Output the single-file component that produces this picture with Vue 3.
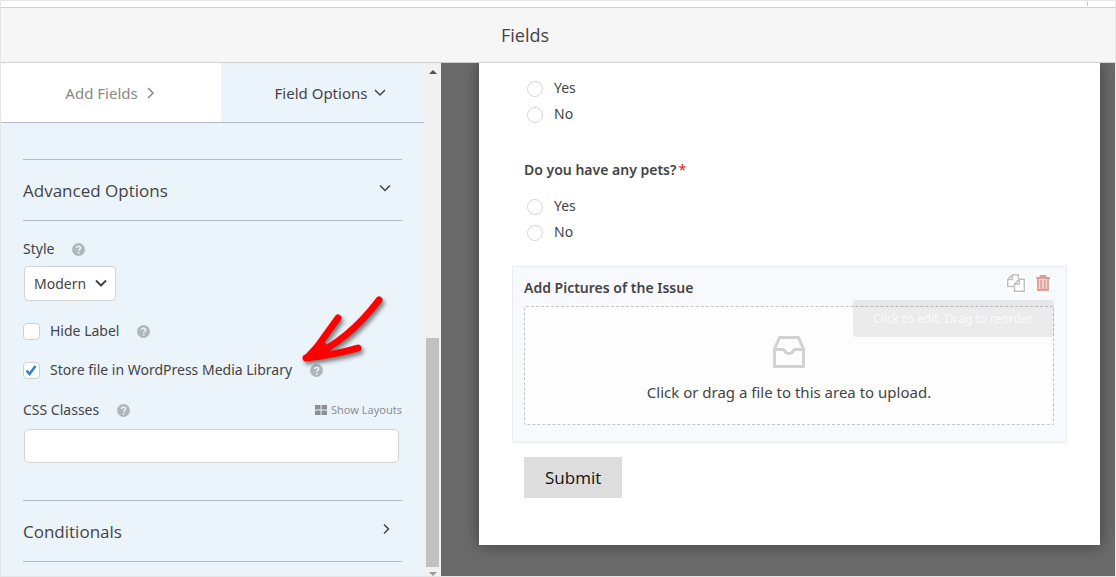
<script setup>
import { ref } from 'vue'

const hideLabel = ref(false)
const storeFile = ref(true)
const style = ref('modern')
const cssClasses = ref('')
const people = ref('')
const pets = ref('')
</script>

<template>
  <div class="page">
    <div class="strip"><span class="tick"></span></div>
    <header class="header"><h1>Fields</h1></header>

    <div class="builder">
      <aside class="sidebar">
        <div class="pane">
          <nav class="tabs">
            <button type="button" class="tab">
              Add Fields
              <svg class="chev" viewBox="0 0 12 12"><path d="M3 1l5 5-5 5" /></svg>
            </button>
            <button type="button" class="tab active">
              Field Options
              <svg class="chev" viewBox="0 0 12 12"><path d="M1 3l5 5 5-5" /></svg>
            </button>
          </nav>

          <div class="options">
            <button type="button" class="section">
              Advanced Options
              <svg class="chev dark" viewBox="0 0 12 12"><path d="M1 3.500l5 5 5-5" /></svg>
            </button>

            <div class="row style-row">
              <label for="style">Style</label>
              <svg class="help" viewBox="0 0 12 12"><circle cx="6" cy="6" r="6" /><path d="M4.200 4.700c0-2.400 3.700-2.200 3.700 0 0 1.300-1.700 1.200-1.700 2.400M6.200 8.200v1.500" /></svg>
            </div>
            <div class="select-wrap">
              <select id="style" v-model="style">
                <option value="modern">Modern</option>
                <option value="classic">Classic</option>
              </select>
              <svg class="select-arrow" viewBox="0 0 12 12"><path d="M1 3.500l5 5 5-5" /></svg>
            </div>

            <div class="row check-row">
              <input id="hide" v-model="hideLabel" type="checkbox" />
              <label for="hide">Hide Label</label>
              <svg class="help" viewBox="0 0 12 12"><circle cx="6" cy="6" r="6" /><path d="M4.200 4.700c0-2.400 3.700-2.200 3.700 0 0 1.300-1.700 1.200-1.700 2.400M6.200 8.200v1.500" /></svg>
            </div>
            <div class="row check-row">
              <input id="store" v-model="storeFile" type="checkbox" />
              <svg v-if="storeFile" class="tickmark" viewBox="0 0 12 12"><path d="M1.500 6.500l3 3.500L10.500 2" /></svg>
              <label for="store">Store file in WordPress Media Library</label>
              <svg class="help" viewBox="0 0 12 12"><circle cx="6" cy="6" r="6" /><path d="M4.200 4.700c0-2.400 3.700-2.200 3.700 0 0 1.300-1.700 1.200-1.700 2.400M6.200 8.200v1.500" /></svg>
              <svg class="pointer" viewBox="0 0 90 74">
                <path d="M79 6Q48 47 10 63L38 24" />
                <path d="M6 64Q34 61 58 54" />
                <path d="M8 63L21 49L27 57z" />
              </svg>
            </div>

            <div class="row css-row">
              <label for="css">CSS Classes</label>
              <svg class="help" viewBox="0 0 12 12"><circle cx="6" cy="6" r="6" /><path d="M4.200 4.700c0-2.400 3.700-2.200 3.700 0 0 1.300-1.700 1.200-1.700 2.400M6.200 8.200v1.500" /></svg>
              <a href="#" class="layouts">
                <svg viewBox="0 0 12 10"><path d="M0 0h5.500v4.500H0zM6.500 0H12v4.500H6.500zM0 5.500h5.500V10H0zM6.500 5.500H12V10H6.500z" /></svg>
                Show Layouts
              </a>
            </div>
            <input id="css" v-model="cssClasses" class="text" type="text" />

            <button type="button" class="section">
              Conditionals
              <svg class="chev dark" viewBox="0 0 12 12"><path d="M5 1.500l4.500 4.500L5 10.500" /></svg>
            </button>
          </div>
        </div>

        <div class="scrollbar">
          <svg class="arrow up" viewBox="0 0 8 4"><path d="M0 4L4 0L8 4z" /></svg>
          <div class="track"><div class="thumb"></div></div>
          <svg class="arrow down" viewBox="0 0 8 4"><path d="M0 0L4 4L8 0z" /></svg>
        </div>
      </aside>

      <main class="preview">
        <form class="sheet" @submit.prevent>
          <div class="field first">
            <label class="choice"><input v-model="people" type="radio" name="people" value="yes" />Yes</label>
            <label class="choice"><input v-model="people" type="radio" name="people" value="no" />No</label>
          </div>

          <fieldset class="field">
            <legend class="title">Do you have any pets?<span class="required">*</span></legend>
            <div class="choices">
              <label class="choice"><input v-model="pets" type="radio" name="pets" value="yes" />Yes</label>
              <label class="choice"><input v-model="pets" type="radio" name="pets" value="no" />No</label>
            </div>
          </fieldset>

          <div class="field selected">
            <div class="title">Add Pictures of the Issue</div>
            <div class="dropzone">
              <svg class="inbox" viewBox="0 0 32 32">
                <path d="M1.500 13L6.500 1.500h19l5 11.500v17.500h-29zM1.500 13.500h9c1 0 1 4 5.500 4s4.500-4 5.500-4h9" />
              </svg>
              <p>Click or drag a file to this area to upload.</p>
            </div>
            <div class="actions">
              <button type="button" aria-label="Duplicate">
                <svg class="copy" viewBox="0 0 18 18"><path d="M7.500 12.500H.7V5.500L5.500.7h5.800v4M5.500.7v4.800H.7M7.500 10l4.800-4.800h5v12.100H7.500zM12.300 5.200V10H7.500" /></svg>
              </button>
              <button type="button" aria-label="Delete">
                <svg class="trash" viewBox="0 0 14 16"><path d="M0 3h14M4.500 3V1h5v2M2 4v11h10V4M5.200 5v9M8.800 5v9" /></svg>
              </button>
            </div>
            <div class="tooltip">Click to edit. Drag to reorder.</div>
          </div>

          <button type="submit" class="submit">Submit</button>
        </form>
      </main>
    </div>
  </div>
</template>

<style>
body { margin: 0; }
</style>

<style scoped>
* { box-sizing: border-box; }
.page {
  min-height: 100vh;
  display: flex;
  flex-direction: column;
  border: 1px solid #e6e6e6;
  background: #fff;
  color: #444;
  font-family: "Noto Sans", "Open Sans", sans-serif;
  font-size: 14px;
  line-height: 24px;
}
button, input, select { font: inherit; color: inherit; margin: 0; }
button { border: 0; background: none; cursor: pointer; }
svg { flex: none; fill: none; stroke: currentColor; }

.strip { height: 6px; display: flex; justify-content: flex-end; padding-right: 27px; }
.tick { width: 1px; height: 5px; background: #ccc; }
.header {
  height: 56px;
  border-top: 1px solid #d0d0d0;
  border-bottom: 1px solid #d0d0d0;
  background: #f6f6f6;
  padding-left: 500px;
}
.header h1 { margin: 0; font-family: "Open Sans", sans-serif; font-size: 18px; font-weight: 400; line-height: 54px; }

.builder { flex: 1; display: flex; }
.sidebar { width: 440px; flex: none; display: flex; background: #ebf3fb; }
.pane { flex: 1; min-width: 0; }
.tabs { display: flex; height: 60px; border-bottom: 1px solid #b0bccb; }
.tab {
  flex: none;
  width: 220px;
  display: flex;
  align-items: center;
  justify-content: center;
  gap: 7px;
  background: #fff;
  color: #888;
  padding: 0;
  font-size: 15px;
}
.tab.active { flex: 1; background: #ebf3fb; color: #444; padding-left: 16px; }
.chev { width: 12px; height: 12px; stroke-width: 1.500; }

.options { padding: 36px 22px 0; }
.section {
  width: 100%;
  height: 62px;
  display: flex;
  align-items: center;
  justify-content: space-between;
  padding: 1px 11px 0 0;
  border-top: 1px solid #b0bccb;
  border-bottom: 1px solid #b0bccb;
  font-family: "Open Sans", sans-serif;
  font-size: 17px;
}
.section .chev { margin-bottom: 5px; }
.row { position: relative; display: flex; align-items: center; height: 24px; }
.help { width: 13px; height: 13px; margin-left: 18px; stroke: none; fill: #b0b6bd; }
.help path { fill: none; stroke: #ebf3fb; stroke-width: 1.500; }
.style-row { margin-top: 16px; }
.select-wrap { position: relative; width: 92px; margin: 5px 0 0 1px; }
.select-wrap select {
  display: block;
  appearance: none;
  width: 100%;
  height: 35px;
  padding: 0 24px 0 9px;
  border: 1px solid #d3d3d3;
  border-radius: 4px;
  background: #fff;
}
.select-arrow { position: absolute; right: 9px; top: 11px; width: 12px; height: 12px; stroke-width: 2; pointer-events: none; }
.check-row { margin-top: 15px; }
.select-wrap + .check-row { margin-top: 18px; }
.check-row input {
  appearance: none;
  width: 17px;
  height: 17px;
  margin-right: 10px;
  border: 1px solid #d0d0d0;
  border-radius: 4px;
  background: #fff;
}
.tickmark { position: absolute; left: 2px; top: 6px; width: 12px; height: 12px; stroke: #2f81c8; stroke-width: 2.500; pointer-events: none; }
.pointer {
  position: absolute;
  left: 277px;
  top: -64px;
  width: 90px;
  height: 74px;
  stroke: #fe0000;
  stroke-width: 7;
  stroke-linecap: round;
  stroke-linejoin: round;
  overflow: visible;
  filter: drop-shadow(2px 3px 2px rgba(0, 0, 0, 0.5));
  pointer-events: none;
}
.css-row { margin-top: 16px; }
.layouts {
  margin-left: auto;
  display: flex;
  align-items: center;
  gap: 4px;
  color: #8c9096;
  font-size: 11px;
  text-decoration: none;
}
.layouts svg { width: 12px; height: 10px; fill: currentColor; stroke: none; }
.text {
  display: block;
  width: calc(100% - 4px);
  height: 34px;
  margin: 7px 0 37px 1px;
  padding: 0 8px;
  border: 1px solid #d3d3d3;
  border-radius: 5px;
  background: #fff;
}

.scrollbar { width: 17px; flex: none; display: flex; flex-direction: column; align-items: center; background: #f1f1f1; }
.arrow { width: 8px; height: 4px; stroke: none; fill: #505050; margin: 7px 0 6px; }
.arrow.down { fill: #999; margin: 5px 0 0; }
.track { flex: 1; width: 13px; display: flex; align-items: flex-end; }
.thumb { width: 100%; height: 47%; background: #c1c1c1; }

.preview { flex: 1; min-width: 0; padding: 0 15px 31px 38px; background: #6a6a6a; overflow: hidden; }
.sheet { background: #fff; padding: 0 33px 47px; box-shadow: 0 0 15px rgba(0, 0, 0, 0.4); }
.field {
  position: relative;
  margin: 0 0 3px;
  padding: 9px 12px 17px 11px;
  border: 1px solid transparent;
}
.field.first { padding-top: 11px; }
fieldset.field { min-width: 0; }
.title { padding: 0; font-weight: 600; line-height: 24px; }
legend.title { float: left; width: 100%; }
.required { color: #e02020; font-weight: 400; margin-left: 2px; }
.choices { clear: both; padding-top: 11px; }
.choice { display: flex; align-items: center; height: 26px; }
.choice input {
  appearance: none;
  width: 16px;
  height: 16px;
  margin: 1px 11px 0 3px;
  border: 1px solid #d6d6d6;
  border-radius: 50%;
  background: #fff;
}
.selected { border-color: #ebecef; background: #f8f9fd; margin-bottom: 14px; }
.dropzone {
  display: flex;
  flex-direction: column;
  align-items: center;
  margin-top: 6px;
  padding: 29px 12px 20px;
  border: 1px dashed #c4c4c4;
  border-radius: 2px;
  background: #fdfdfd;
}
.dropzone p { margin: 12px 0 0; font-size: 15px; }
.inbox { width: 32px; height: 32px; stroke: #d2d2d2; stroke-width: 3; stroke-linejoin: round; }
.actions { position: absolute; right: 12px; top: 5px; display: flex; gap: 5px; }
.actions button {
  width: 22px;
  height: 22px;
  padding: 0;
  border-radius: 50%;
  background: #fff;
  display: flex;
  align-items: center;
  justify-content: center;
}
.copy { width: 18px; height: 18px; stroke: #bfbfbf; stroke-width: 1.400; stroke-linejoin: round; }
.trash { width: 14px; height: 16px; stroke: #dd9f97; fill: #f2d8d3; stroke-width: 1.800; }
.tooltip {
  position: absolute;
  right: 12px;
  top: 33px;
  padding: 6px 20px;
  border-radius: 3px;
  background: rgba(0, 0, 0, 0.07);
  color: #fafafa;
  font-size: 12px;
  line-height: 25px;
}
.submit {
  display: block;
  height: 41px;
  margin-left: 12px;
  padding: 0 21px;
  background: #ddd;
  color: #111;
  font-family: "Open Sans", sans-serif;
  font-size: 17px;
}
</style>
